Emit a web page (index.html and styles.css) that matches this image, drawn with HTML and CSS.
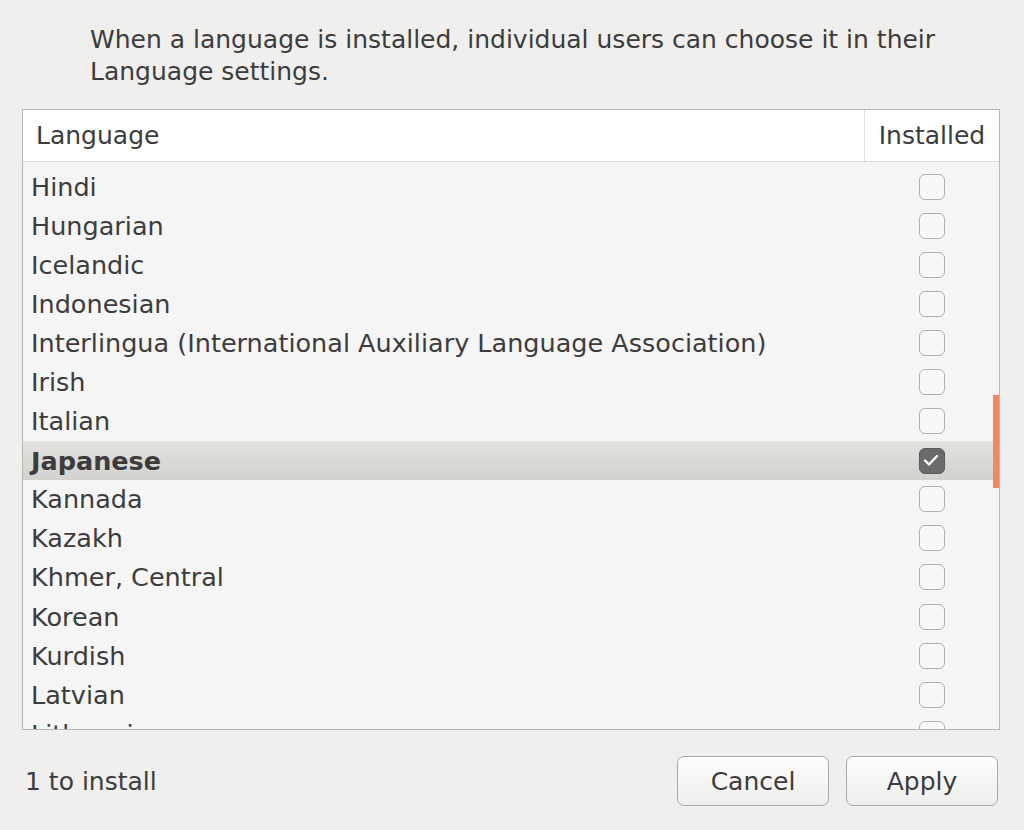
FILE: index.html
```html
<!DOCTYPE html>
<html>
<head>
<meta charset="utf-8">
<link rel="stylesheet" href="styles.css">
</head>
<body>
<div class="dialog">
  <p class="intro">When a language is installed, individual users can choose it in their Language settings.</p>
  <div class="list">
    <div class="list-header">
      <div class="col-lang">Language</div>
      <div class="col-inst">Installed</div>
    </div>
    <div class="rows">
      <div class="row"><span class="name">Hindi</span><span class="check"></span></div>
      <div class="row"><span class="name">Hungarian</span><span class="check"></span></div>
      <div class="row"><span class="name">Icelandic</span><span class="check"></span></div>
      <div class="row"><span class="name">Indonesian</span><span class="check"></span></div>
      <div class="row"><span class="name">Interlingua (International Auxiliary Language Association)</span><span class="check"></span></div>
      <div class="row"><span class="name">Irish</span><span class="check"></span></div>
      <div class="row"><span class="name">Italian</span><span class="check"></span></div>
      <div class="row selected"><span class="name">Japanese</span><span class="check checked"><svg viewBox="0 0 26 26" width="26" height="26"><path d="M7 13.5 L11 17.5 L19 9" fill="none" stroke="#fff" stroke-width="2.4" stroke-linecap="round" stroke-linejoin="round"/></svg></span></div>
      <div class="row"><span class="name">Kannada</span><span class="check"></span></div>
      <div class="row"><span class="name">Kazakh</span><span class="check"></span></div>
      <div class="row"><span class="name">Khmer, Central</span><span class="check"></span></div>
      <div class="row"><span class="name">Korean</span><span class="check"></span></div>
      <div class="row"><span class="name">Kurdish</span><span class="check"></span></div>
      <div class="row"><span class="name">Latvian</span><span class="check"></span></div>
      <div class="row"><span class="name">Lithuanian</span><span class="check"></span></div>
    </div>
    <div class="scroll-thumb"></div>
  </div>
  <div class="footer">
    <span class="status">1 to install</span>
    <div class="buttons">
      <button class="btn">Cancel</button>
      <button class="btn">Apply</button>
    </div>
  </div>
</div>
</body>
</html>
```
FILE: styles.css
```css
html, body {
  margin: 0;
  padding: 0;
  background: #f0efed;
  width: 1024px;
  height: 830px;
  overflow: hidden;
}
body {
  font-family: "DejaVu Sans", "Open Sans", sans-serif;
  color: #3c3c3c;
}
.dialog {
  display: flex;
  flex-direction: column;
  padding: 0 24px 0 22px;
  height: 830px;
  box-sizing: border-box;
}
.intro {
  margin: 24px 0 0 68px;
  font-size: 25px;
  line-height: 32px;
  height: 85px;
  width: 880px;
}
.list {
  position: relative;
  border: 1px solid #b6b6b4;
  height: 621px;
  box-sizing: border-box;
  overflow: hidden;
  background: #f5f5f5;
}
.list-header {
  display: grid;
  grid-template-columns: 1fr 135px;
  height: 52px;
  background: #ffffff;
  border-bottom: 1px solid #dcdcdc;
  box-sizing: border-box;
  font-size: 25px;
}
.col-lang {
  padding-left: 13px;
  display: flex;
  align-items: center;
}
.col-inst {
  border-left: 1px solid #dcdcdc;
  display: flex;
  align-items: center;
  justify-content: center;
}
.rows {
  padding-top: 5px;
}
.row {
  display: grid;
  grid-template-columns: 1fr 135px;
  height: 39.1px;
  align-items: center;
  font-size: 25.5px;
  box-sizing: border-box;
}
.name {
  padding-left: 8px;
  white-space: nowrap;
}
.check {
  justify-self: center;
  width: 26px;
  height: 26px;
  box-sizing: border-box;
  border: 1.5px solid #b0b0b0;
  border-radius: 6px;
  background: #f8f8f8;
  display: flex;
}
.check.checked {
  background: #6b6b6b;
  border-color: #5c5c5c;
}
.check.checked svg {
  margin: -1.5px;
}
.row.selected {
  background: linear-gradient(#e2e1de, #d4d2cf);
  border-top: 1px solid #ebeae8;
  font-weight: 700;
}
.scroll-thumb {
  position: absolute;
  right: 0;
  top: 285px;
  width: 6px;
  height: 93px;
  background: #ec8b63;
}
.footer {
  display: flex;
  align-items: center;
  justify-content: space-between;
  margin-top: 26px;
  padding-left: 3px;
}
.status {
  font-size: 25px;
}
.buttons {
  display: flex;
  gap: 17px;
  margin-right: 2px;
}
.btn {
  width: 152px;
  height: 50px;
  border: 1px solid #a9a9a7;
  border-radius: 7px;
  background: linear-gradient(#fdfdfd, #eeeeec);
  font-family: inherit;
  font-size: 25px;
  color: #3c3c3c;
  box-shadow: 0 1px 0 rgba(255,255,255,0.8) inset;
}
```
